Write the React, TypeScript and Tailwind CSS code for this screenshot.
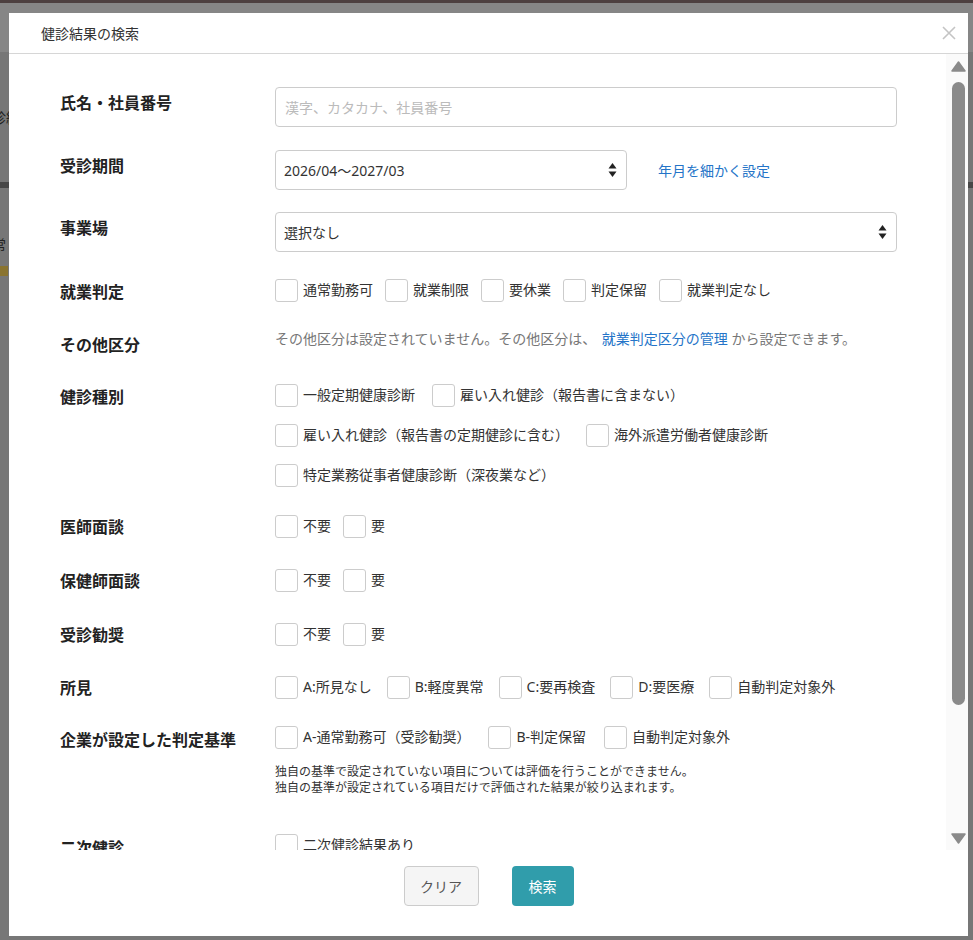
import React from "react";

const font = { fontFamily: '"Noto Sans", "Noto Sans CJK JP", sans-serif' };

// fake checkbox + text
const Check = ({ label, gap = "mr-[12px]" }: { label: string; gap?: string }) => (
  <label className={`flex items-center h-[24px] ${gap}`}>
    <span className="w-[23px] h-[23px] border border-[#cccccc] rounded-[3px] bg-white shrink-0" />
    <span className="ml-[5px] text-[14px] text-[#333] leading-[20px] whitespace-nowrap">{label}</span>
  </label>
);

const Arrows = () => (
  <svg width="9" height="16" viewBox="0 0 9 16" className="shrink-0">
    <path d="M4.5 1 L8.5 6.5 L0.5 6.5 Z" fill="#222" />
    <path d="M4.5 15 L8.5 9.5 L0.5 9.5 Z" fill="#222" />
  </svg>
);

// label column does not add height to the row, the field decides it
const Row = ({ label, top, labelPt, children }: { label: string; top: string; labelPt: string; children: React.ReactNode }) => (
  <div className={`flex items-start ${top}`}>
    <div className="w-[266px] shrink-0 h-0 overflow-visible">
      <div className={`pl-[51px] text-[16px] font-bold text-[#222] leading-[22px] whitespace-nowrap ${labelPt}`}>{label}</div>
    </div>
    <div className="w-[622px]">{children}</div>
  </div>
);

const App = () => {
  return (
    <div className="relative w-[973px] h-[940px] overflow-hidden bg-[#777777]" style={font}>
      {/* page behind the overlay */}
      <div className="border-t-[3px] border-[#4d4040] h-[52px] bg-[#868686]" />
      <div className="h-[130px] pt-[53px]">
        <span className="ml-[-22px] text-[14px] text-[#222] whitespace-nowrap">健診結果</span>
      </div>
      <div className="h-[6px] bg-[#474747]" />
      <div className="pt-[44px] h-[78px]">
        <span className="ml-[-22px] text-[14px] text-[#222] whitespace-nowrap">通常</span>
      </div>
      <div className="w-[8px] h-[10px] bg-[#8a7430]" />

      {/* modal */}
      <div className="absolute left-[9px] top-[13px] w-[959px] h-[923px] bg-white flex flex-col">
        <div className="h-[41px] shrink-0 border-b border-[#d6d6d6] flex items-center justify-between pl-[32px] pr-[12px]">
          <span className="text-[14px] text-[#333]">健診結果の検索</span>
          <svg width="14" height="14" viewBox="0 0 14 14">
            <path d="M1 1 L13 13 M13 1 L1 13" stroke="#c4c4c4" strokeWidth="1.6" />
          </svg>
        </div>

        <div className="flex h-[796px] shrink-0">
          <div className="flex-1 overflow-hidden pt-[33px]">
            <Row label="氏名・社員番号" top="" labelPt="pt-[5px]">
              <div className="h-[40px] border border-[#cccccc] rounded-[4px] flex items-center px-[9px]">
                <span className="text-[14px] text-[#bbbbbb]">漢字、カタカナ、社員番号</span>
              </div>
            </Row>

            <Row label="受診期間" top="mt-[23px]" labelPt="pt-[5px]">
              <div className="flex items-center">
                <div className="w-[352px] h-[40px] border border-[#cccccc] rounded-[4px] flex items-center justify-between pl-[8px] pr-[9px]">
                  <span className="text-[14px] text-[#333]">2026/04〜2027/03</span>
                  <Arrows />
                </div>
                <a className="ml-[31px] text-[14px] text-[#2474c8]">年月を細かく設定</a>
              </div>
            </Row>

            <Row label="事業場" top="mt-[22px]" labelPt="pt-[5px]">
              <div className="h-[40px] border border-[#cccccc] rounded-[4px] flex items-center justify-between pl-[8px] pr-[9px]">
                <span className="text-[14px] text-[#333]">選択なし</span>
                <Arrows />
              </div>
            </Row>

            <Row label="就業判定" top="mt-[26px]" labelPt="pt-[3px]">
              <div className="flex">
                {["通常勤務可", "就業制限", "要休業", "判定保留", "就業判定なし"].map((t) => (
                  <Check key={t} label={t} />
                ))}
              </div>
            </Row>

            <Row label="その他区分" top="mt-[27px]" labelPt="pt-[5px]">
              <p className="text-[14px] leading-[20px] text-[#777] whitespace-nowrap">
                その他区分は設定されていません。その他区分は、 <a className="ml-[2px] text-[#2474c8]">就業判定区分の管理</a> から設定できます。
              </p>
            </Row>

            <Row label="健診種別" top="mt-[34px]" labelPt="pt-[3px]">
              <div className="flex flex-col gap-[16px]">
                <div className="flex">
                  <Check label="一般定期健康診断" gap="mr-[17px]" />
                  <Check label="雇い入れ健診（報告書に含まない）" gap="mr-[17px]" />
                </div>
                <div className="flex">
                  <Check label="雇い入れ健診（報告書の定期健診に含む）" gap="mr-[17px]" />
                  <Check label="海外派遣労働者健康診断" gap="mr-[17px]" />
                </div>
                <div className="flex">
                  <Check label="特定業務従事者健康診断（深夜業など）" gap="mr-[17px]" />
                </div>
              </div>
            </Row>

            <Row label="医師面談" top="mt-[27px]" labelPt="pt-[2px]">
              <div className="flex">
                <Check label="不要" />
                <Check label="要" />
              </div>
            </Row>

            <Row label="保健師面談" top="mt-[30px]" labelPt="pt-[2px]">
              <div className="flex">
                <Check label="不要" />
                <Check label="要" />
              </div>
            </Row>

            <Row label="受診勧奨" top="mt-[30px]" labelPt="pt-[2px]">
              <div className="flex">
                <Check label="不要" />
                <Check label="要" />
              </div>
            </Row>

            <Row label="所見" top="mt-[29px]" labelPt="pt-[2px]">
              <div className="flex">
                {["A:所見なし", "B:軽度異常", "C:要再検査", "D:要医療", "自動判定対象外"].map((t) => (
                  <Check key={t} label={t} gap="mr-[15px]" />
                ))}
              </div>
            </Row>

            <Row label="企業が設定した判定基準" top="mt-[26px]" labelPt="pt-[4px]">
              <div className="flex">
                <Check label="A-通常勤務可（受診勧奨）" gap="mr-[18px]" />
                <Check label="B-判定保留" gap="mr-[18px]" />
                <Check label="自動判定対象外" gap="mr-[18px]" />
              </div>
              <p className="mt-[15px] text-[12px] leading-[16px] text-[#333] whitespace-nowrap">
                独自の基準で設定されていない項目については評価を行うことができません。
                <br />
                独自の基準が設定されている項目だけで評価された結果が絞り込まれます。
              </p>
            </Row>

            <Row label="二次健診" top="mt-[37px]" labelPt="pt-[4px]">
              <div className="flex">
                <Check label="二次健診結果あり" />
              </div>
            </Row>
          </div>

          {/* scrollbar */}
          <div className="w-[22px] shrink-0 bg-[#fafafa] flex flex-col items-center pl-[2px]">
            <svg width="15" height="11" viewBox="0 0 15 11" className="mt-[7px]">
              <path d="M7.5 1 L14 10 L1 10 Z" fill="#8a8a8a" stroke="#8a8a8a" strokeWidth="1.5" strokeLinejoin="round" />
            </svg>
            <div className="mt-[10px] w-[13px] h-[623px] rounded-full bg-[#8a8a8a]" />
            <div className="flex-1" />
            <svg width="15" height="11" viewBox="0 0 15 11" className="mb-[6px]">
              <path d="M7.5 10 L14 1 L1 1 Z" fill="#8a8a8a" stroke="#8a8a8a" strokeWidth="1.5" strokeLinejoin="round" />
            </svg>
          </div>
        </div>

        <div className="flex-1 flex justify-center items-start pt-[16px] gap-[33px]">
          <button className="w-[75px] h-[40px] bg-[#f5f5f5] border border-[#cccccc] rounded-[4px] text-[14px] text-[#555]">
            クリア
          </button>
          <button className="w-[62px] h-[40px] bg-[#309dab] rounded-[4px] text-[14px] text-white">検索</button>
        </div>
      </div>
    </div>
  );
};

export default App;
